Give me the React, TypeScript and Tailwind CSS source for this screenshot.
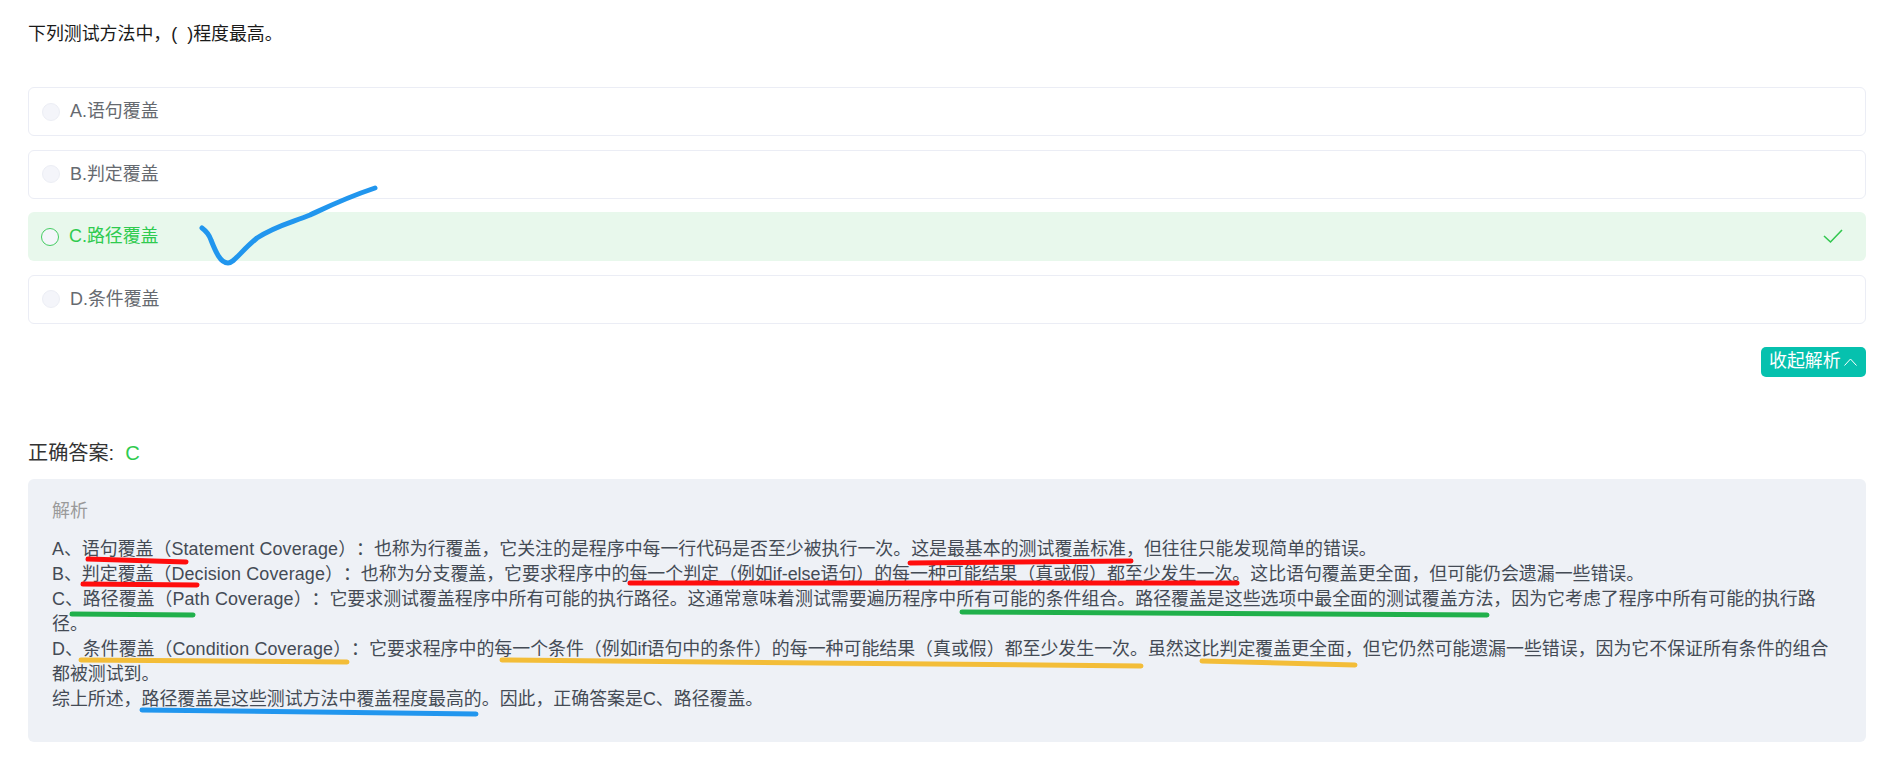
const options = [
  { label: "A.语句覆盖", correct: false },
  { label: "B.判定覆盖", correct: false },
  { label: "C.路径覆盖", correct: true },
  { label: "D.条件覆盖", correct: false },
];

const analysis = [
  { head: "A、语句覆盖（", term: "Statement Coverage", body: "）：也称为行覆盖，它关注的是程序中每一行代码是否至少被执行一次。这是最基本的测试覆盖标准，但往往只能发现简单的错误。" },
  { head: "B、判定覆盖（", term: "Decision Coverage", body: "）：也称为分支覆盖，它要求程序中的每一个判定（例如if-else语句）的每一种可能结果（真或假）都至少发生一次。这比语句覆盖更全面，但可能仍会遗漏一些错误。" },
  { head: "C、路径覆盖（", term: "Path Coverage", body: "）：它要求测试覆盖程序中所有可能的执行路径。这通常意味着测试需要遍历程序中所有可能的条件组合。路径覆盖是这些选项中最全面的测试覆盖方法，因为它考虑了程序中所有可能的执行路径。" },
  { head: "D、条件覆盖（", term: "Condition Coverage", body: "）：它要求程序中的每一个条件（例如if语句中的条件）的每一种可能结果（真或假）都至少发生一次。虽然这比判定覆盖更全面，但它仍然可能遗漏一些错误，因为它不保证所有条件的组合都被测试到。" },
  { head: "综上所述，路径覆盖是这些测试方法中覆盖程度最高的。因此，正确答案是C、路径覆盖。", term: "", body: "" },
];

// hand-drawn marks on top of the page
const Annotations = () => (
  <svg className="absolute left-0 top-0 pointer-events-none" width="1889" height="758" fill="none" strokeLinecap="round" strokeLinejoin="round">
    <path d="M202 228 C206 231 209 234 211 240 C215 250 220 263 228 263 C234 263 240 252 257 238 C275 226 290 223 310 215 C325 208 345 198 375 188" stroke="#2196ee" strokeWidth="5" />
    <path d="M88 559 L186 562" stroke="#ff0d0d" strokeWidth="5" />
    <path d="M83 584 L197 585" stroke="#ff0d0d" strokeWidth="5" />
    <path d="M630 583 L1237 583" stroke="#ff0d0d" strokeWidth="5" />
    <path d="M910 563 L1131 561" stroke="#ff0d0d" strokeWidth="5" />
    <path d="M72 614 L193 615" stroke="#20b04b" strokeWidth="5" />
    <path d="M962 612 L1487 615" stroke="#20b04b" strokeWidth="5" />
    <path d="M81 660 L347 662" stroke="#f3bd38" strokeWidth="5" />
    <path d="M502 660 L1141 666" stroke="#f3bd38" strokeWidth="5" />
    <path d="M1202 661 L1355 665" stroke="#f3bd38" strokeWidth="5" />
    <path d="M142 710 L476 714" stroke="#2196ee" strokeWidth="5" />
  </svg>
);

export default function App() {
  return (
    <div
      className="relative h-[758px] overflow-hidden bg-white pl-[28px] pr-[23px] pt-[22px] [text-spacing-trim:space-all]"
      style={{ fontFamily: '"Liberation Sans", "Noto Sans CJK SC", sans-serif' }}
    >
      <p className="text-[17.92px] leading-[24px] text-[#1a1a1a]">下列测试方法中，(&nbsp;&nbsp;)程度最高。</p>

      <div className="mt-[41px] flex flex-col gap-[13.5px]">
        {options.map((o) =>
          o.correct ? (
            <div key={o.label} className="flex h-[49px] items-center rounded-[6px] bg-[#e8f8ec] pl-[13px] pr-[23px] text-[17.92px] text-[#2fcb4f]">
              <span className="mr-[10px] h-[18px] w-[18px] rounded-full border border-[#45cc62] bg-[#f4f6fa]" />
              <span className="flex-1">{o.label}</span>
              <svg width="20" height="15" viewBox="0 0 20 15" fill="none" stroke="#32c74f" strokeWidth="1.6">
                <path d="M1 7 L7.5 13 L19 1" />
              </svg>
            </div>
          ) : (
            <div key={o.label} className="flex h-[49px] items-center rounded-[6px] border border-[#ebedf5] bg-white pl-[13px] text-[17.92px] text-[#666a70]">
              <span className="mr-[10px] h-[18px] w-[18px] rounded-full border border-[#eceef5] bg-[#f4f5fa]" />
              <span>{o.label}</span>
            </div>
          )
        )}
      </div>

      <div className="mt-[23px] flex justify-end">
        <button className="flex h-[30px] w-[105px] items-center gap-[3px] rounded-[5px] bg-[#06c1ae] pl-[8px] text-[17.92px] text-white">
          收起解析
          <svg width="13" height="8" viewBox="0 0 13 8" fill="none" stroke="#ffffff" strokeWidth="1">
            <path d="M0.5 7.5 L6.5 1 L12.5 7.5" />
          </svg>
        </button>
      </div>

      <div className="mt-[63px] flex h-[28px] items-center text-[20.16px] text-[#333333]">
        <span>正确答案:</span>
        <span className="ml-[11px] text-[#2fcb4f]">C</span>
      </div>

      <div className="mt-[11px] h-[263px] rounded-[6px] bg-[#eef1f6] px-[24px] pt-[20px]">
        <div className="text-[17.92px] leading-[24px] text-[#9a9a9a]">解析</div>
        <div className="mt-[14px] text-[17.92px] leading-[25.14px] text-[#444b55]">
          {analysis.map((line) => (
            <div key={line.head}>
              {line.head}
              <span className="tracking-[0.14px]">{line.term}</span>
              {line.body}
            </div>
          ))}
        </div>
      </div>

      <Annotations />
    </div>
  );
}
